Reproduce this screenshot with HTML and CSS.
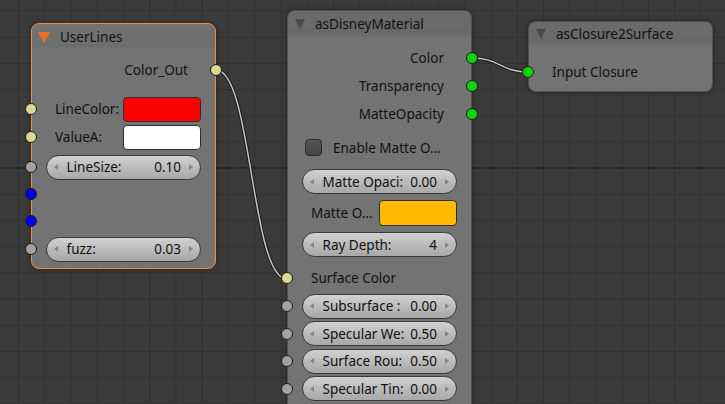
FILE: index.html
```html
<!DOCTYPE html>
<html>
<head>
<meta charset="utf-8">
<link rel="stylesheet" href="styles.css">
</head>
<body>
<div class="canvas">
  <svg class="wires" width="725" height="404" viewBox="0 0 725 404">
    <path class="wire-out" d="M216,70 C252,70 251,279 287,279"/>
    <path class="wire-in" d="M216,70 C252,70 251,279 287,279"/>
    <path class="wire-out" d="M472,58 C500,58 500,72 529,72"/>
    <path class="wire-in" d="M472,58 C500,58 500,72 529,72"/>
  </svg>

  <div class="node n-user selected">
    <div class="head h-user"><span class="tri tri-orange"></span><span class="title">UserLines</span></div>
    <div class="body b-user">
      <div class="row out"><span class="olbl">Color_Out</span><i class="sock s-yellow sock-r"></i></div>
      <div class="row field m13"><i class="sock s-yellow sock-l"></i><span class="flbl">LineColor:</span><span class="swatch red"></span></div>
      <div class="row field m2"><i class="sock s-yellow sock-l"></i><span class="flbl">ValueA:</span><span class="swatch white"></span></div>
      <div class="row m4"><i class="sock s-grey sock-l"></i>
        <div class="slider"><i class="arr arr-l"></i><span class="stext"><span>LineSize:</span><span>0.10</span></span><i class="arr arr-r"></i></div>
      </div>
      <div class="row m1"><i class="sock s-blue sock-l"></i></div>
      <div class="row m1"><i class="sock s-blue sock-l"></i></div>
      <div class="row m2"><i class="sock s-grey sock-l"></i>
        <div class="slider"><i class="arr arr-l"></i><span class="stext"><span>fuzz:</span><span>0.03</span></span><i class="arr arr-r"></i></div>
      </div>
    </div>
  </div>

  <div class="node n-disney">
    <div class="head h-disney"><span class="tri tri-dark"></span><span class="title">asDisneyMaterial</span></div>
    <div class="body b-disney">
      <div class="row out"><span class="olbl">Color</span><i class="sock s-green sock-r"></i></div>
      <div class="row out m2"><span class="olbl">Transparency</span><i class="sock s-green sock-r"></i></div>
      <div class="row out m2"><span class="olbl">MatteOpacity</span><i class="sock s-green sock-r"></i></div>
      <div class="row check m7"><span class="checkbox"></span><span class="clbl">Enable Matte O…</span></div>
      <div class="row srow m8">
        <div class="slider"><i class="arr arr-l"></i><span class="stext"><span>Matte Opaci:</span><span>0.00</span></span><i class="arr arr-r"></i></div>
      </div>
      <div class="row field tall m5"><span class="flbl">Matte O…</span><span class="swatch yellow"></span></div>
      <div class="row srow m6">
        <div class="slider"><i class="arr arr-l"></i><span class="stext"><span>Ray Depth:</span><span>4</span></span><i class="arr arr-r"></i></div>
      </div>
      <div class="row inp m8"><i class="sock s-yellow sock-l"></i><span class="ilbl">Surface Color</span></div>
      <div class="row srow m25"><i class="sock s-grey sock-l"></i>
        <div class="slider"><i class="arr arr-l"></i><span class="stext"><span>Subsurface :</span><span>0.00</span></span><i class="arr arr-r"></i></div>
      </div>
      <div class="row srow m25"><i class="sock s-grey sock-l"></i>
        <div class="slider"><i class="arr arr-l"></i><span class="stext"><span>Specular We:</span><span>0.50</span></span><i class="arr arr-r"></i></div>
      </div>
      <div class="row srow m25"><i class="sock s-grey sock-l"></i>
        <div class="slider"><i class="arr arr-l"></i><span class="stext"><span>Surface Rou:</span><span>0.50</span></span><i class="arr arr-r"></i></div>
      </div>
      <div class="row srow m25"><i class="sock s-grey sock-l"></i>
        <div class="slider"><i class="arr arr-l"></i><span class="stext"><span>Specular Tin:</span><span>0.00</span></span><i class="arr arr-r"></i></div>
      </div>
    </div>
  </div>

  <div class="node n-closure">
    <div class="head h-closure"><span class="tri tri-dark"></span><span class="title">asClosure2Surface</span></div>
    <div class="body b-closure">
      <div class="row inp"><i class="sock s-green sock-l"></i><span class="ilbl">Input Closure</span></div>
    </div>
  </div>
</div>
</body>
</html>
```
FILE: styles.css
```css
* { box-sizing: border-box; }
html, body { margin: 0; padding: 0; }
body {
  width: 725px;
  height: 404px;
  overflow: hidden;
  font-family: "Noto Sans", "Open Sans", sans-serif;
  font-size: 13.5px;
  color: #111;
}
.canvas {
  position: relative;
  width: 725px;
  height: 404px;
  overflow: hidden;
  background-color: #3a3a3a;
  background-image:
    linear-gradient(to bottom, transparent 167.5px, #2a2a2a 167.5px, #2a2a2a 168.7px, transparent 168.7px),
    linear-gradient(90deg, #313131 1px, transparent 1px),
    linear-gradient(to bottom, #313131 1px, transparent 1px);
  background-size: 100% 100%, 26.25px 100%, 100% 26.2px;
  background-position: 0 0, 18px 0, 0 10.5px;
}
.wires { position: absolute; left: 0; top: 0; }
.wire-out { fill: none; stroke: #1e1e1e; stroke-width: 3.6; }
.wire-in { fill: none; stroke: #c4c4c4; stroke-width: 1.5; }

.node {
  position: absolute;
  width: 185px;
  border: 1px solid rgba(20,20,20,0.35);
  border-radius: 8px;
  background: rgba(122,122,122,0.9);
  box-shadow: 0 0 4px rgba(0,0,0,0.45);
}
.node.selected { border: 1.5px solid #ef8f3c; }
.n-user { left: 31px; top: 23px; height: 246px; }
.n-disney { left: 287px; top: 10px; height: 420px; }
.n-closure { left: 528px; top: 21px; height: 71px; }

.head {
  display: flex;
  align-items: center;
  padding-left: 7px;
  border-radius: 7px 7px 0 0;
  background: linear-gradient(to bottom, rgba(100,100,100,0.55), rgba(95,95,95,0.55) 85%, rgba(110,110,110,0.3));
}
.h-user { height: 26px; padding-left: 6px; background: linear-gradient(to bottom, rgba(112,112,112,0.4), rgba(104,104,104,0.5) 85%, rgba(118,118,118,0.3)); }
.h-disney { height: 26px; }
.h-closure { height: 24px; }
.title { margin-left: 10px; white-space: nowrap; }
.tri {
  width: 0; height: 0;
  border-left: 6px solid transparent;
  border-right: 6px solid transparent;
  border-top: 11px solid #4a4a4a;
}
.tri-orange { border-top-color: #e8721f; border-left-width: 6.5px; border-right-width: 6.5px; }
.tri-dark { border-left-width: 5.5px; border-right-width: 5.5px; border-top-width: 10px; }

.body { display: flex; flex-direction: column; }
.b-user { padding-top: 7px; }
.b-disney { padding-top: 8px; }
.b-closure { padding-top: 13px; }

.row {
  position: relative;
  height: 26px;
  display: flex;
  align-items: center;
  flex-shrink: 0;
}
.m1 { margin-top: 1px; }
.m2 { margin-top: 2px; }
.m25 { margin-top: 2.5px; }
.m4 { margin-top: 4px; }
.m5 { margin-top: 5px; }
.m6 { margin-top: 6px; }
.m7 { margin-top: 7px; }
.m8 { margin-top: 8px; }
.m13 { margin-top: 13px; }

.out { justify-content: flex-end; padding-right: 27px; }
.inp { padding-left: 23px; }
.srow { height: 25px; }
.tall { height: 27px; }

.sock {
  position: absolute;
  top: 50%;
  width: 12px;
  height: 12px;
  margin-top: -6px;
  border-radius: 50%;
  border: 1px solid #1c1c1c;
}
.sock-l { left: -7px; }
.sock-r { right: -7px; }
.s-yellow { background: #d9d98f; }
.s-grey { background: #a2a2a2; }
.s-blue { background: #0000f0; }
.s-green { background: #0fd40f; }

.field { padding: 0 14px 0 23px; }
.flbl { flex: 1; white-space: nowrap; }
.swatch {
  width: 78px;
  height: 25px;
  border-radius: 4px;
  border: 1px solid #2e2e2e;
}
.tall .swatch { height: 26px; }
.red { background: #ff0000; }
.white { background: #ffffff; }
.yellow { background: #ffba00; }

.check { height: 27px; padding-left: 17px; }
.checkbox {
  width: 17px;
  height: 17px;
  border-radius: 4px;
  border: 1px solid #2c2c2c;
  background: linear-gradient(to bottom, #555, #444);
}
.clbl { margin-left: 11px; white-space: nowrap; }

.slider {
  margin: 0 14px;
  width: 155px;
  height: 25px;
  border-radius: 12.5px;
  border: 1px solid #393939;
  background: linear-gradient(to bottom, #d2d2d2, #b9b9b9 55%, #a8a8a8);
  display: flex;
  align-items: center;
  padding: 0 7px;
}
.stext {
  flex: 1;
  display: flex;
  justify-content: space-between;
  margin: 0 8px 0 8.5px;
  white-space: nowrap;
}
.arr { width: 0; height: 0; border-top: 3.5px solid transparent; border-bottom: 3.5px solid transparent; }
.arr-l { border-right: 4.5px solid #858585; }
.arr-r { border-left: 4.5px solid #858585; }
```
